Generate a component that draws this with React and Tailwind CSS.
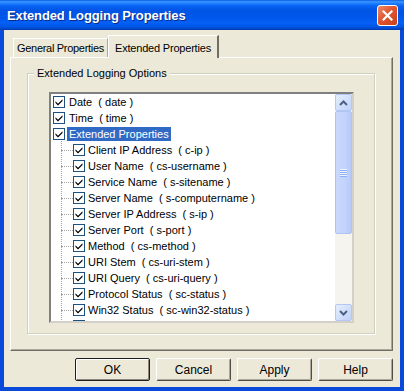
import React from "react";

const items = [
  { label: "Date", code: "date", level: 0 },
  { label: "Time", code: "time", level: 0 },
  { label: "Extended Properties", code: null, level: 0, selected: true },
  { label: "Client IP Address", code: "c-ip", level: 1 },
  { label: "User Name", code: "cs-username", level: 1 },
  { label: "Service Name", code: "s-sitename", level: 1 },
  { label: "Server Name", code: "s-computername", level: 1 },
  { label: "Server IP Address", code: "s-ip", level: 1 },
  { label: "Server Port", code: "s-port", level: 1 },
  { label: "Method", code: "cs-method", level: 1 },
  { label: "URI Stem", code: "cs-uri-stem", level: 1 },
  { label: "URI Query", code: "cs-uri-query", level: 1 },
  { label: "Protocol Status", code: "sc-status", level: 1 },
  { label: "Win32 Status", code: "sc-win32-status", level: 1 },
  { label: "Bytes Sent", code: "sc-bytes", level: 1 },
];

function Check() {
  return (
    <div className="w-[12px] h-[12px] shrink-0 border border-[#1C5180] bg-white flex items-center justify-center">
      <svg width="8" height="8" viewBox="0 0 8 8">
        <path d="M0.5 3.5 L3 6 L7.5 1.5" stroke="#21A121" strokeWidth="0" fill="none" />
        <path d="M0.5 3.2 L3 5.7 L7.5 1.2 L7.5 3 L3 7.5 L0.5 5 Z" fill="#000" />
      </svg>
    </div>
  );
}

function Row({ item }) {
  const text = item.code ? `${item.label}  ( ${item.code} )` : item.label;
  if (item.level === 0) {
    return (
      <div className="h-[16px] flex items-center pl-[2px] relative">
        <Check />
        <span
          className={
            "ml-[2px] px-[2px] h-[14px] leading-[14px] whitespace-pre " +
            (item.selected ? "bg-[#316AC5] text-white" : "text-black")
          }
        >
          {text}
        </span>
      </div>
    );
  }
  return (
    <div className="h-[16px] flex items-center relative">
      <div className="ml-[10px] w-[12px] h-0 border-t border-dotted border-[#A0A0A0]" />
      <Check />
      <span className="ml-[3px] whitespace-pre text-black">{text}</span>
    </div>
  );
}

function Btn({ label, def }) {
  return (
    <div
      className={
        "w-[75px] h-[23px] flex items-center justify-center text-[12px] text-black rounded-[2px] " +
        (def
          ? "border border-[#1E1E1E] shadow-[inset_1px_1px_0_#FFFFFF,inset_-1px_-1px_0_#8A877A]"
          : "border border-t-white border-l-white border-r-[#4E4D48] border-b-[#4E4D48] shadow-[inset_-1px_-1px_0_#ACA899]")
      }
    >
      {label}
    </div>
  );
}

export default function App() {
  return (
    <div className="w-[404px] h-[391px] overflow-hidden flex flex-col bg-[#0A4ADB] font-['Liberation_Sans',Arial,sans-serif] text-[11px]">
      {/* title bar */}
      <div className="h-[30px] shrink-0 flex items-center justify-between pl-[7px] pr-[6px] bg-[linear-gradient(to_bottom,#0A5DE8_0%,#3D95FF_6%,#1B7CFF_12%,#0862F2_20%,#0055E5_35%,#0057EB_60%,#0560F5_75%,#0058E8_88%,#0046C8_96%,#0036A8_100%)]">
        <span className="text-white font-bold text-[13px] tracking-[-0.1px] leading-none pt-[1px] [text-shadow:1px_1px_0_#0A2A8A]">
          Extended Logging Properties
        </span>
        <div className="w-[21px] h-[21px] rounded-[3px] border border-white bg-[linear-gradient(135deg,#F08A6A_0%,#E0552F_45%,#C8401E_100%)] flex items-center justify-center">
          <svg width="11" height="11" viewBox="0 0 11 11">
            <path d="M1.5 1.5 L9.5 9.5 M9.5 1.5 L1.5 9.5" stroke="white" strokeWidth="2.2" strokeLinecap="square" />
          </svg>
        </div>
      </div>

      {/* body */}
      <div className="flex-1 mx-[4px] mb-[4px] bg-[#ECE9D8] flex flex-col pl-[6px] pr-[7px] pt-[5px]">
        {/* tabs */}
        <div className="h-[23px] flex items-end relative z-10 -mb-[1px]">
          <div className="ml-[3px] w-[95px] h-[19px] mb-[1px] border-t border-l border-white border-r border-r-[#ACA899] flex items-center justify-center text-[11px] text-black tracking-[-0.3px]">
            General Properties
          </div>
          <div className="w-[111px] h-[23px] bg-[#ECE9D8] border-t border-l border-white border-r-2 border-r-[#716F64] flex items-start justify-center pt-[4px] text-[11px] text-black tracking-[-0.2px]">
            Extended Properties
          </div>
        </div>

        {/* panel */}
        <div className="h-[294px] border border-t-white border-l-white border-r-[#716F64] border-b-[#716F64] shadow-[inset_-1px_-1px_0_#ACA899] pt-[15px] pl-[16px] pr-[17px]">
          {/* group box */}
          <div className="relative h-[261px] border border-[#D0D0BF] shadow-[1px_1px_0_#FFFFFF,inset_1px_1px_0_#FFFFFF] pt-[18px] pl-[21px] pr-[20px]">
            <div className="absolute left-[6px] -top-[8px] bg-[#ECE9D8] px-[3px] text-[11px] leading-[14px] text-black">
              Extended Logging Options
            </div>
            {/* list box */}
            <div className="h-[231px] border-2 border-t-[#808080] border-l-[#808080] border-r-[#D4D0C8] border-b-[#D4D0C8] bg-white flex overflow-hidden relative">
              <div className="absolute inset-0 border border-t-[#404040] border-l-[#404040] border-r-white border-b-white pointer-events-none hidden" />
              <div className="flex-1 relative overflow-hidden">
                <div className="absolute left-[10px] top-[40px] h-[200px] w-0 border-l border-dotted border-[#A0A0A0]" />
                <div className="relative">
                  {items.map((it, i) => (
                    <Row key={i} item={it} />
                  ))}
                </div>
              </div>
              {/* scrollbar */}
              <div className="w-[17px] shrink-0 flex flex-col bg-[#F5F4EE]">
                <div className="h-[17px] shrink-0 rounded-[2px] border border-[#B4C8F6] bg-[linear-gradient(to_bottom_right,#E6EEFC,#BFD2FA)] flex items-center justify-center">
                  <svg width="9" height="6" viewBox="0 0 9 6">
                    <path d="M1 5 L4.5 1.5 L8 5" stroke="#4D6185" strokeWidth="2" fill="none" />
                  </svg>
                </div>
                <div className="h-[123px] shrink-0 rounded-[2px] border border-[#AEC4F4] bg-[linear-gradient(to_right,#CAD8FB,#C2D3FC_60%,#B7CAF7)] flex items-center justify-center">
                  <div className="flex flex-col gap-[1px]">
                    <div className="w-[7px] h-[1px] bg-[#EEF4FE] shadow-[0_1px_0_#8CB0F8]" />
                    <div className="w-[7px] h-[1px] bg-[#EEF4FE] shadow-[0_1px_0_#8CB0F8]" />
                    <div className="w-[7px] h-[1px] bg-[#EEF4FE] shadow-[0_1px_0_#8CB0F8]" />
                    <div className="w-[7px] h-[1px] bg-[#EEF4FE] shadow-[0_1px_0_#8CB0F8]" />
                  </div>
                </div>
                <div className="flex-1" />
                <div className="h-[17px] shrink-0 rounded-[2px] border border-[#B4C8F6] bg-[linear-gradient(to_bottom_right,#E6EEFC,#BFD2FA)] flex items-center justify-center">
                  <svg width="9" height="6" viewBox="0 0 9 6">
                    <path d="M1 1 L4.5 4.5 L8 1" stroke="#4D6185" strokeWidth="2" fill="none" />
                  </svg>
                </div>
              </div>
            </div>
          </div>
        </div>

        {/* buttons */}
        <div className="flex justify-end gap-[6px] pt-[7px] pr-[0px]">
          <Btn label="OK" def />
          <Btn label="Cancel" />
          <Btn label="Apply" />
          <Btn label="Help" />
        </div>
      </div>
    </div>
  );
}
